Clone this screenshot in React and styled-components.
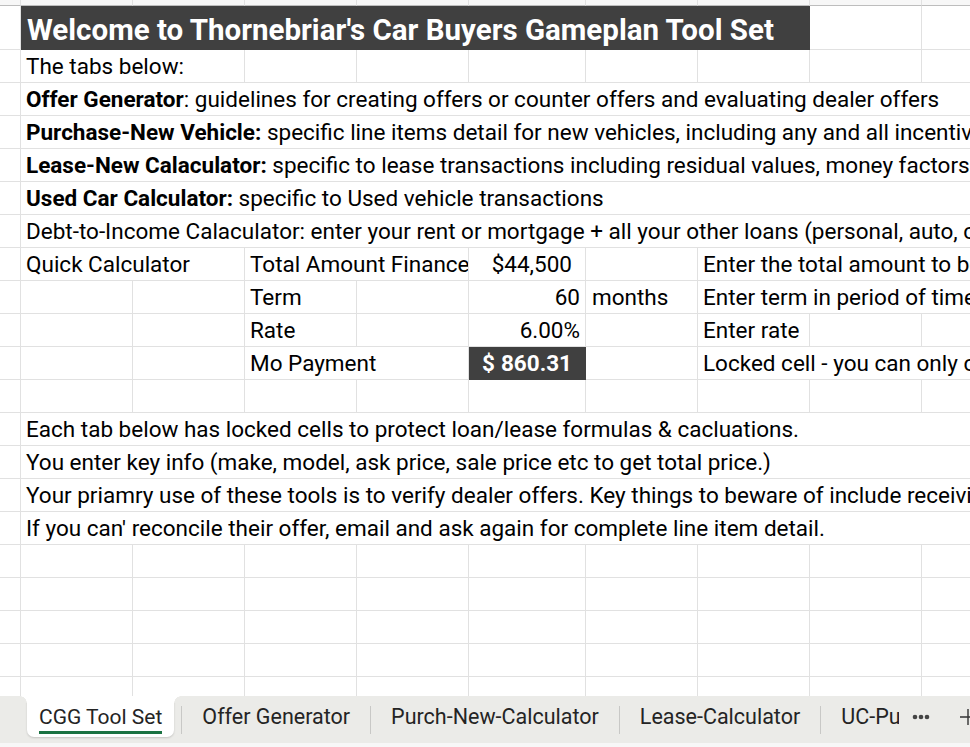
import React from "react";
import styled, { createGlobalStyle } from "styled-components";

const Global = createGlobalStyle`
  html, body { margin: 0; padding: 0; background: #fff; }
  body { width: 970px; height: 747px; overflow: hidden; }
`;

const COLS = "21px 112px 112px 112px 112px 117px 112px 112px 112px 112px";
const GRID = "#e1e1e1";
const FILL = "#404040";

const Page = styled.div`
  width: 970px;
  height: 747px;
  display: flex;
  flex-direction: column;
  overflow: hidden;
`;

const Sheet = styled.div`
  flex: 1;
  overflow: hidden;
  font-family: Roboto, "Liberation Sans", sans-serif;
  color: #000;
`;

const Row = styled.div`
  display: grid;
  grid-template-columns: ${COLS};
  height: ${(p) => p.$h || 33}px;
  width: 1033px;
`;

const Cell = styled.div`
  box-sizing: border-box;
  grid-column: span ${(p) => p.$span || 1};
  border-right: 1px solid ${(p) => (p.$fill ? p.$fill : GRID)};
  border-bottom: 1px solid ${(p) => (p.$fill ? p.$fill : p.$topLine ? "#bdbdbd" : GRID)};
  background: ${(p) => p.$fill || (p.$top ? "#f7f7f7" : "transparent")};
  color: ${(p) => (p.$fill ? "#fff" : "#000")};
  font-size: 22.5px;
  font-weight: ${(p) => (p.$bold ? 700 : 400)};
  white-space: nowrap;
  overflow: hidden;
  display: flex;
  align-items: flex-end;
  justify-content: ${(p) => (p.$right ? "flex-end" : "flex-start")};
  line-height: 26px;
  padding: 0 ${(p) => p.$padR ?? 5}px 3px ${(p) => p.$padL ?? 5}px;
`;

const Title = styled(Cell)`
  font-size: 29.5px;
  line-height: 34px;
  padding-bottom: 2px;
  padding-left: 6px;
`;

const Money = styled(Cell)`
  justify-content: space-between;
  padding-left: 13px;
  padding-right: 13px;
`;

const Strong = styled.b`
  font-weight: 700;
`;

const TabBar = styled.div`
  height: 47px;
  flex: none;
  background: #ebebe8;
  display: flex;
  align-items: stretch;
  font-family: Roboto, "Liberation Sans", sans-serif;
  font-size: 21.5px;
  color: #242424;
`;

const TabStrip = styled.div`
  width: 899px;
  flex: none;
  overflow: hidden;
  display: flex;
  align-items: stretch;
  padding-left: 27px;
  box-sizing: border-box;
`;

const ActiveTab = styled.div`
  position: relative;
  flex: none;
  background: #fff;
  height: 41px;
  padding: 0 12px;
  border-radius: 0 0 7px 7px;
  box-shadow: 0 1px 2px rgba(0, 0, 0, 0.16);
  display: flex;
  align-items: center;
  margin-right: 7px;
  font-size: 21px;

  &::before,
  &::after {
    content: "";
    position: absolute;
    top: 0;
    width: 7px;
    height: 7px;
  }
  &::before {
    left: -7px;
    background: radial-gradient(circle at 0 100%, #ebebe8 6.5px, #fff 7px);
  }
  &::after {
    right: -7px;
    background: radial-gradient(circle at 100% 100%, #ebebe8 6.5px, #fff 7px);
  }
`;

const ActiveLabel = styled.span`
  display: inline-block;
  padding-bottom: 2px;
  border-bottom: 3px solid #1b7343;
  margin-top: 5px;
  line-height: 24px;
`;

const Tab = styled.div`
  flex: none;
  padding: 0 20px 6px 20px;
  display: flex;
  align-items: center;
  height: 47px;
  box-sizing: border-box;
`;

const Sep = styled.div`
  flex: none;
  width: 1px;
  height: 28px;
  margin-top: 10px;
  background: #c8c8c6;
`;

const IconBtn = styled.div`
  flex: none;
  display: flex;
  align-items: center;
  justify-content: center;
  width: ${(p) => p.$w}px;
  padding-bottom: 6px;
  box-sizing: border-box;
`;

const BottomEdge = styled.div`
  height: 4px;
  flex: none;
  background: #f7f7f7;
`;

const empty = (n) => Array.from({ length: n }, (_, i) => <Cell key={"e" + i} />);

function TextRow({ children }) {
  return (
    <Row>
      <Cell />
      <Cell $span={9}>{children}</Cell>
    </Row>
  );
}

export default function App() {
  return (
    <>
      <Global />
      <Page>
        <Sheet>
          <Row $h={6}>
            {Array.from({ length: 10 }, (_, i) => (
              <Cell key={i} $top $topLine />
            ))}
          </Row>
          <Row $h={44}>
            <Cell />
            <Title $span={7} $fill={FILL} $bold>
              Welcome to Thornebriar's Car Buyers Gameplan Tool Set
            </Title>
            {empty(2)}
          </Row>
          <Row>
            <Cell />
            <Cell $span={2}>The tabs below:</Cell>
            {empty(7)}
          </Row>
          <TextRow>
            <Strong>Offer Generator</Strong>: guidelines for creating offers or counter offers and evaluating dealer offers
          </TextRow>
          <TextRow>
            <Strong>Purchase-New Vehicle:</Strong>&nbsp;specific line items detail for new vehicles, including any and all incentives
          </TextRow>
          <TextRow>
            <Strong>Lease-New Calaculator:</Strong>&nbsp;specific to lease transactions including residual values, money factors
          </TextRow>
          <TextRow>
            <Strong>Used Car Calculator:</Strong>&nbsp;specific to Used vehicle transactions
          </TextRow>
          <TextRow>
            Debt-to-Income Calaculator: enter your rent or mortgage + all your other loans (personal, auto, cards)
          </TextRow>
          <Row>
            <Cell />
            <Cell $span={2}>Quick Calculator</Cell>
            <Cell $span={2}>Total Amount Finance</Cell>
            <Cell $right $padR={13}>$44,500</Cell>
            <Cell />
            <Cell $span={3}>Enter the total amount to be financed</Cell>
          </Row>
          <Row>
            {empty(3)}
            <Cell>Term</Cell>
            <Cell />
            <Cell $right>60</Cell>
            <Cell $padL={6}>months</Cell>
            <Cell $span={3}>Enter term in period of time</Cell>
          </Row>
          <Row>
            {empty(3)}
            <Cell>Rate</Cell>
            <Cell />
            <Cell $right>6.00%</Cell>
            <Cell />
            <Cell>Enter rate</Cell>
            {empty(2)}
          </Row>
          <Row>
            {empty(3)}
            <Cell $span={2}>Mo Payment</Cell>
            <Money $fill={FILL} $bold>
              <span>$</span>
              <span>860.31</span>
            </Money>
            <Cell />
            <Cell $span={3}>Locked cell - you can only change inputs</Cell>
          </Row>
          <Row>{empty(10)}</Row>
          <TextRow>Each tab below has locked cells to protect loan/lease formulas &amp; cacluations.</TextRow>
          <TextRow>You enter key info (make, model, ask price, sale price etc to get total price.)</TextRow>
          <TextRow>
            Your priamry use of these tools is to verify dealer offers. Key things to beware of include receiving
          </TextRow>
          <TextRow>If you can' reconcile their offer, email and ask again for complete line item detail.</TextRow>
          {Array.from({ length: 5 }, (_, i) => (
            <Row key={i}>{empty(10)}</Row>
          ))}
        </Sheet>
        <TabBar>
          <TabStrip>
            <ActiveTab>
              <ActiveLabel>CGG Tool Set</ActiveLabel>
            </ActiveTab>
            <Sep />
            <Tab>Offer Generator</Tab>
            <Sep />
            <Tab>Purch-New-Calculator</Tab>
            <Sep />
            <Tab>Lease-Calculator</Tab>
            <Sep />
            <Tab>UC-Purchase-Calculator</Tab>
          </TabStrip>
          <IconBtn $w={44}>
            <svg width="18" height="6" viewBox="0 0 18 6">
              <circle cx="3" cy="3" r="2.3" fill="#444" />
              <circle cx="9" cy="3" r="2.3" fill="#444" />
              <circle cx="15" cy="3" r="2.3" fill="#444" />
            </svg>
          </IconBtn>
          <IconBtn $w={50}>
            <svg width="18" height="18" viewBox="0 0 18 18">
              <path d="M9 1v16M1 9h16" stroke="#333" strokeWidth="1.4" />
            </svg>
          </IconBtn>
        </TabBar>
        <BottomEdge />
      </Page>
    </>
  );
}
